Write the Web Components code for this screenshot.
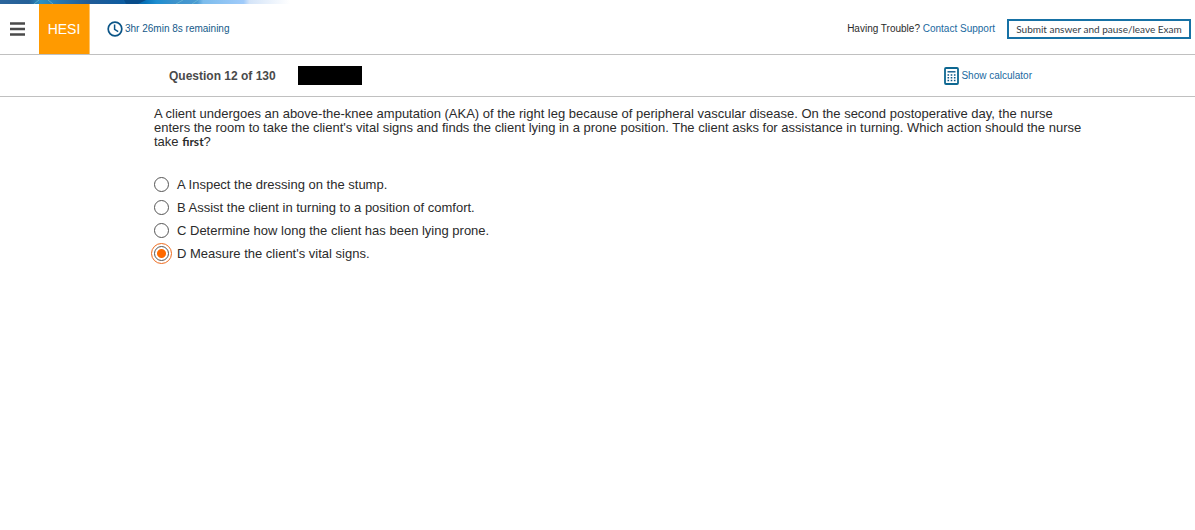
<!DOCTYPE html>
<html lang="en">
<head>
<meta charset="utf-8">
<title>HESI Exam</title>
<style>
  body { margin: 0; background: #fff; color: #2b2b2b; font: 13px/14px "Liberation Sans", Arial, sans-serif; font-variant-ligatures: none; }
</style>
</head>
<body>
<exam-app></exam-app>
<script>
const define = (name, html, setup) => customElements.define(name, class extends HTMLElement {
  connectedCallback() {
    if (this.shadowRoot) return;
    const t = document.createElement('template');
    t.innerHTML = html;
    this.attachShadow({ mode: 'open' }).append(t.content.cloneNode(true));
    if (setup) setup(this, this.shadowRoot);
  }
});

define('color-strip', `
<style>
  :host { display: block; height: 4px; }
  svg { display: block; }
</style>
<svg width="290" height="4" aria-hidden="true">
  <defs><linearGradient id="g">
    <stop offset="0" stop-color="#2c659c"/><stop offset=".1" stop-color="#246098"/>
    <stop offset=".14" stop-color="#2c91c4"/><stop offset=".2" stop-color="#2678b2"/>
    <stop offset=".3" stop-color="#215b96"/><stop offset=".42" stop-color="#0e5ca0"/>
    <stop offset=".5" stop-color="#0872b8"/><stop offset=".54" stop-color="#1d8ed0"/>
    <stop offset=".6" stop-color="#3c91cb"/><stop offset=".68" stop-color="#4a9bd2"/>
    <stop offset=".7" stop-color="#7cbcec"/><stop offset=".84" stop-color="#a0cbfa"/>
    <stop offset=".86" stop-color="#d4e4f8"/><stop offset="1" stop-color="#fff"/>
  </linearGradient></defs>
  <path fill="url(#g)" d="M0 0h290v4H0z"/>
  <path d="M34 4l5-4M48 0l5 4M176 4l7-4M192 4l6-4" stroke="#79c4d5" opacity=".6"/>
  <path d="M124 0h22l-8 4h-12z" fill="#084c8a"/>
</svg>`);

define('exam-timer', `
<style>
  :host { display: flex; align-items: center; gap: 2px; color: #145a8a; }
  svg { display: block; }
</style>
<svg width="16" height="16" viewBox="0 0 16 16" fill="none" stroke="#0b5587" aria-hidden="true">
  <circle cx="8" cy="8" r="6.8" stroke-width="1.7"/><path d="M7.6 3.6v4.8l3.6 2.2" stroke-width="1.5"/>
</svg>
<span><slot></slot></span>`);

define('exam-header', `
<style>
  :host { display: flex; align-items: stretch; height: 50px; border-bottom: 1px solid #c0c0c0; font-size: 10px; }
  .menu { width: 39px; border: 0; padding: 0 0 0 10px; background: none; }
  svg { display: block; }
  .brand { width: 51px; display: grid; place-items: center; background: #ff9a00; color: #fff; font-size: 14px; border-right: 1px solid #ffc46b; box-sizing: border-box; }
  exam-timer { margin-left: 17px; }
  .right { margin-left: auto; padding-right: 4px; display: flex; align-items: center; gap: 12px; }
  a { color: #1a69a0; text-decoration: none; }
  .submit { height: 20px; width: 184px; padding: 0; border: 2px solid #1671a5; background: #fff; color: #333c46; font: 10px/12px Lato, sans-serif; white-space: nowrap; }
</style>
<button class="menu" aria-label="Menu"><svg width="15" height="14" aria-hidden="true"><path d="M0 1.5h15M0 7h15M0 12.5h15" stroke="#4a4a4a" stroke-width="2.4"/></svg></button>
<div class="brand">HESI</div>
<exam-timer>3hr 26min 8s remaining</exam-timer>
<div class="right">
  <span>Having Trouble? <a href="#support">Contact Support</a></span>
  <button class="submit">Submit answer and pause/leave Exam</button>
</div>`);

define('question-bar', `
<style>
  :host { display: flex; align-items: center; height: 41px; border-bottom: 1px solid #c0c0c0; padding: 0 163px 0 169px; }
  h1 { margin: 0; font-size: 12px; line-height: 14px; color: #4a4a4a; }
  .redacted { width: 64px; height: 19px; margin-left: 22px; background: #000; }
  a { margin-left: auto; display: flex; align-items: center; gap: 2px; color: #1a69a0; text-decoration: none; font-size: 10px; }
  svg { display: block; }
</style>
<h1><slot></slot></h1>
<div class="redacted"></div>
<a href="#calculator"><svg width="15" height="18" viewBox="0 0 15 18" aria-hidden="true">
  <rect x="1" y="1" width="13" height="16" rx="1" fill="#fff" stroke="#0d6791" stroke-width="1.8"/>
  <path d="M3.5 4.8h8" stroke="#0d5a8a" stroke-width="1.4"/>
  <path d="M3.5 8h8.500M3.500 10.800h8.500M3.500 13.600h8.500" stroke="#0d5a8a" stroke-width="1.5" stroke-dasharray="1.600 1.600"/>
</svg><span>Show calculator</span></a>`);

define('answer-option', `
<style>
  :host { display: block; }
  label { display: flex; align-items: center; gap: 8px; height: 23px; }
  input { appearance: none; box-sizing: border-box; flex: none; width: 15px; height: 15px; margin: 0; border: 1px solid #555; border-radius: 50%; background: #fff; }
  input:checked { background: radial-gradient(circle, #ff6a00 4px, #fff 5px); outline: 1px solid #ee6a1c; outline-offset: 2px; }
</style>
<label><input type="radio"><span><slot></slot></span></label>`, (host, root) => {
  const input = root.querySelector('input');
  input.checked = host.hasAttribute('checked');
  input.addEventListener('change', () => {
    for (const other of host.parentNode.querySelectorAll('answer-option'))
      if (other !== host) other.shadowRoot.querySelector('input').checked = false;
  });
});

define('exam-question', `
<style>
  :host { display: block; padding: 10px 108px 0 154px; }
  p { margin: 0 0 24px; }
</style>
<p><slot name="stem"></slot></p>
<div role="radiogroup" aria-label="Answers"><slot></slot></div>`);

define('exam-app', `
<style>
  :host { display: block; }
  b { font: bold 12px/14px Lato, sans-serif; font-variant-ligatures: normal; }
</style>
<color-strip></color-strip>
<exam-header></exam-header>
<question-bar>Question 12 of 130</question-bar>
<exam-question>
  <span slot="stem">A client undergoes an above-the-knee amputation (AKA) of the right leg because of peripheral vascular disease. On the second postoperative day, the nurse enters the room to take the client's vital signs and finds the client lying in a prone position. The client asks for assistance in turning. Which action should the nurse take <b>first</b>?</span>
  <answer-option>A Inspect the dressing on the stump.</answer-option>
  <answer-option>B Assist the client in turning to a position of comfort.</answer-option>
  <answer-option>C Determine how long the client has been lying prone.</answer-option>
  <answer-option checked>D Measure the client's vital signs.</answer-option>
</exam-question>`);
</script>
</body>
</html>
